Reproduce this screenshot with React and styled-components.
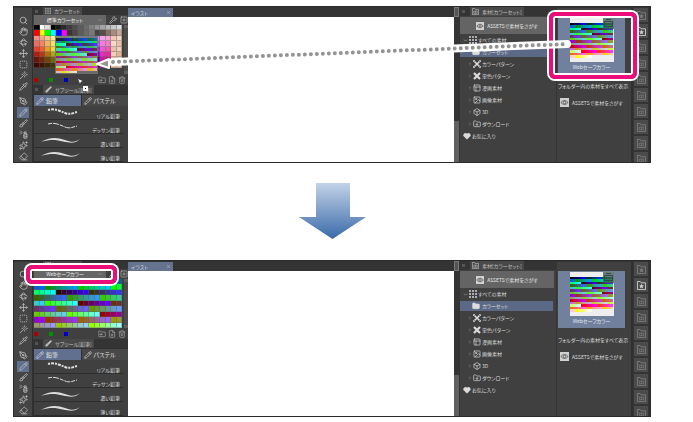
import styled, { createGlobalStyle } from "styled-components";
import {
    Search, Hand, Rotate3d, Move, SquareDashed, Wand, Pipette, PenTool, Pencil, Brush,
    SprayCan, Sparkles, Eraser, ChevronDown, ChevronRight, Wrench, SquarePlus, FolderInput,
    FilePlus, Trash2, Folder, X, PanelsTopLeft, Image, Box, FolderDown,
    Heart, MousePointer2
} from "lucide-react";

const GlobalStyle = createGlobalStyle`

    * {
        box-sizing: border-box;
    }

    body {
        margin: 0;
        background-color: #fff;
        font-family: 'Noto Sans CJK JP', sans-serif;
        font-size: 5px;
        line-height: 8px;
        color: #dcdcdc;
    }

    button, select {
        margin: 0;
        padding: 0;
        border: 0;
        font: inherit;
        color: inherit;
        background: none;
    }

    svg {
        display: block;
        flex-shrink: 0;
    }

    ul {
        margin: 0;
        padding: 0;
        list-style: none;
    }
`;

const Page = styled.main`
    display: flex;
    flex-direction: column;
    padding: 6px 42px 4px 13px;
    font-feature-settings: "palt";
    white-space: nowrap;
`;

const WindowDiv = styled.section`
    position: relative;
    display: grid;
    grid-template-columns: 19px 95px 1fr 6px 96px 77px 17px;
    border: 1px solid #2a2a2a;
    background-color: #303030;
`;

// columns that are cut off by the window and never make it taller
const Clipped = styled.div`
    height: 0;
    min-height: 100%;
    overflow: hidden;
`;

const ToolBar = styled(Clipped)`
    display: flex;
    flex-direction: column;
    margin-right: 1px;
    padding-top: 7px;
    background-color: #454545;
    border-top: 1px solid #363636;

    button:nth-child(8) {
        margin-top: 4px;
    }
`;

const ToolButton = styled.button`
    display: flex;
    flex-shrink: 0;
    align-items: center;
    justify-content: center;
    height: 11px;
    margin: 0 3px;
    color: #c4c4c4;
    background-color: ${(props) => (props.$active ? "#61708f" : "transparent")};
`;

const Panel = styled.div`
    display: flex;
    flex-direction: column;
    min-width: 0;
    background-color: #404040;
`;

const TabStrip = styled.div`
    display: flex;
    align-items: center;
    gap: 3px;
    height: ${(props) => props.$height || 8}px;
    padding-left: 2px;
    background-color: #343434;
`;

const Grip = styled.span`
    width: 3px;
    height: 3px;
    margin-right: 2px;
    background-color: #555;
`;

const PanelTab = styled.div`
    display: flex;
    align-items: center;
    gap: 3px;
    height: 100%;
    padding: 0 2px;
    color: #c0c0c0;
    background-color: #484848;
`;

const SetRow = styled.div`
    display: flex;
    align-items: center;
    gap: 3px;
    height: 10px;
    padding-left: 1px;
    color: #bdbdbd;
`;

const SelectBox = styled.label`
    display: grid;
    grid-template-columns: 1fr 9px;
    align-items: center;
    flex: 1;
    height: 10px;
    background-color: #666;
    color: #eee;

    select {
        grid-area: 1 / 1 / 2 / 3;
        height: 10px;
        padding-right: 10px;
        appearance: none;
        text-align: center;
        text-align-last: center;
    }

    svg {
        grid-area: 1 / 2;
        color: #aaa;
        pointer-events: none;
    }
`;

const PaletteRow = styled.div`
    display: flex;
    justify-content: space-between;
    height: 49px;
    padding-left: 1px;
`;

const SwatchGrid = styled.div`
    display: grid;
    grid-template-columns: repeat(16, 1fr);
    grid-auto-rows: 1fr;
    width: ${(props) => props.$width}px;
    height: ${(props) => props.$height}px;
`;

const Swatch = styled.span`
    box-shadow: ${(props) => (props.$lined ? "inset -1px -1px rgba(95, 95, 95, 0.4)" : "none")};
`;

const ScrollTrack = styled.div`
    width: 4px;
    background-color: #4c4c4c;
    border-top: 3px solid #606060;
    border-bottom: 3px solid #606060;
`;

const PaletteFooter = styled.div`
    display: flex;
    align-items: center;
    gap: 2px;
    height: 11px;
    padding: 0 2px 0 1px;
    color: #a8a8a8;

    .marks {
        display: flex;
        flex: 1;
        gap: 11px;
    }
`;

const Mark = styled.span`
    width: 4px;
    height: 4px;
    background-color: ${(props) => props.$color};
`;

const IconButton = styled.button`
    display: flex;
    align-items: center;
    justify-content: center;
`;

const GroupTabs = styled.div`
    display: flex;
    gap: 1px;
    height: 12px;
    padding: 1px 0 0 1px;
    background-color: #303030;
`;

const GroupTab = styled.button`
    display: flex;
    align-items: center;
    gap: 2px;
    flex: 1;
    padding-left: 2px;
    font-size: 6px;
    color: #e0e0e0;
    background-color: ${(props) => (props.$active ? "#61708f" : "#484848")};
`;

const BrushList = styled.ul`
    padding-right: 5px;
    border-left: 1px solid #303030;
`;

const BrushItem = styled.li`
    display: flex;
    height: 14px;
    padding: 0 3px 0 7px;
    border-bottom: 1px solid #2d2d2d;

    span {
        align-self: flex-end;
        flex: 1;
        line-height: 6px;
        text-align: right;
    }
`;

const CanvasArea = styled.div`
    display: flex;
    flex-direction: column;
    background-color: #fff;
`;

const CanvasBar = styled.div`
    display: flex;
    align-items: flex-end;
    height: 10px;
    background-color: #343434;
`;

const CanvasTab = styled.button`
    display: flex;
    align-items: center;
    justify-content: space-between;
    width: 45px;
    height: 9px;
    padding: 0 2px 0 3px;
    background-color: #66738f;
    color: #c8cedb;
`;

const SideScroll = styled.div`
    display: flex;
    flex-direction: column;
    justify-content: space-between;
    padding-right: 1px;
    background-color: #343434;

    i {
        height: 10px;
        background-color: #555;
        border: 1px solid #777;
    }

    b {
        height: 41px;
        background-color: #606060;
    }
`;

const AssetsButton = styled.button`
    display: flex;
    align-items: center;
    justify-content: center;
    gap: 3px;
    height: 17px;
    margin: 1px 2px 0 0;
    background-color: #646464;
    color: #e4e4e4;
`;

const TreeItem = styled.li`
    display: flex;
    align-items: center;
    height: 12px;
    padding-left: ${(props) => (props.$root ? 3 : 8)}px;

    > div {
        display: flex;
        align-items: center;
        gap: 1px;
        flex: 1;
        height: 10px;
    }

    ${(props) => props.$active && `
        padding-left: 0;
        padding-right: 3px;

        > div {
            gap: 2px;
            padding-left: 12px;
            background-color: #5b6986;
        }
    `}
`;

const Results = styled(Panel)`
    gap: 8px;
    padding: 9px 6px 0 1px;
    border-top: 1px solid #343434;
    border-left: 1px solid #353535;
    border-right: 2px solid #303030;
`;

const MaterialCard = styled.button`
    display: flex;
    flex-direction: column;
    align-items: center;
    gap: 1px;
    height: 57px;
    padding-top: 1px;
    background-color: #71809d;
    color: #e4e8f0;
`;

const Thumbnail = styled.span`
    display: grid;
    justify-items: center;
    align-items: center;
    width: 44px;
    height: 44px;
    background-color: #eee;

    > * {
        grid-area: 1 / 1;
    }

    > svg {
        justify-self: end;
        align-self: start;
        background-color: rgba(60, 85, 80, 0.75);
        color: #2f4a44;
    }
`;

const AssetsLink = styled.a`
    display: flex;
    align-items: center;
    gap: 3px;
    padding-left: 2px;
    color: inherit;
    text-decoration: none;
`;

const SideBar = styled(Clipped)`
    display: flex;
    flex-direction: column;
    background-color: #343434;
`;

const SideButton = styled.button`
    display: flex;
    flex-shrink: 0;
    align-items: center;
    justify-content: center;
    width: 16px;
    height: 16px;
    border: 1px solid #353535;
    background-color: #4b4b4b;
    color: ${(props) => (props.$active ? "#d0d0d0" : "#7d7d7d")};
`;

const ArrowBox = styled.div`
    display: flex;
    justify-content: center;
    padding: 20px 0 21px 1px;
`;

// callouts over the windows
const Callout = styled.div`
    position: absolute;
    border: 4px solid #ec0c7a;
    border-radius: 6px;
    box-shadow: 0 0 0 2px #fff, inset 0 0 0 2px #fff;
    pointer-events: none;
`;

const CardCallout = styled(Callout)`
    top: 5px;
    right: 13px;
    width: 88px;
    height: 67px;
`;

const SelectCallout = styled(Callout)`
    top: 4px;
    left: 12px;
    width: 91px;
    height: 19px;
`;

const DragPath = styled.svg`
    position: absolute;
    top: 30px;
    left: 82px;
    width: calc(100% - 165px);
    height: 40px;
    overflow: visible;
    pointer-events: none;
`;

const DragGhost = styled.div`
    position: absolute;
    top: 29px;
    left: 41px;
    padding: 2px 1px 1px;
    background-color: #737373;
    opacity: 0.85;
`;

const Cursor = styled.div`
    position: absolute;
    top: 70px;
    left: 62px;
    display: flex;
    align-items: flex-end;

    span {
        width: 5px;
        height: 5px;
        margin-bottom: -5px;
        margin-left: -2px;
        border: 2px solid #fff;
        background-color: #000;
    }
`;

const steps = ["00", "33", "66", "99", "cc", "ff"];
const webColors = steps.flatMap((r) => steps.flatMap((g) => steps.map((b) => `#${r}${g}${b}`)));

const firstRows = [
    "#000", "#fff", "#ddd", "#000", "#181818", "#2a2a2a", "#3c3c3c", "#4c4c4c",
    "#5c5c5c", "#6c6c6c", "#808080", "#929292", "#a4a4a4", "#b6b6b6", "#c8c8c8", "#dadada",
    "#f00", "#ff0", "#0f0", "#0ff", "#00f", "#f0f", "#3c3434", "#504444",
    "#5c5c5c", "#6a6a6a", "#787878", "#444", "#5a4c48", "#85706a", "#a88c80", "#c8a898"
];
const hues = [4, 16, 35, 56, 80, 110, 150, 180, 200, 220, 250, 275, 312, 325];
const shades = [74, 66, 55, 38, 24, 13];
const pinks = [80, 72, 64, 54, 44, 36];
const skins = ["#f0c8b4", "#f6d6c6", "#ecc0a8", "#f4cfba", "#e4b498", "#eec4ac"];

const standardColors = [
    ...firstRows,
    ...shades.flatMap((light, row) => [
        ...hues.map((hue) => `hsl(${hue}, 80%, ${hue > 300 ? pinks[row] : light}%)`),
        skins[row], skins[(row + 1) % 6]
    ])
];

function DotGrid({ size }) {
    return (
        <svg width={size} height={size} viewBox="0 0 8 8" fill="currentColor">
            <path d="M0 0h2v2H0zM3 0h2v2H3zM6 0h2v2H6zM0 3h2v2H0zM3 3h2v2H3zM6 3h2v2H6zM0 6h2v2H0zM3 6h2v2H3zM6 6h2v2H6z" opacity="0.7" />
        </svg>
    );
}

function ColorPattern({ size }) {
    return (
        <svg width={size} height={size} viewBox="0 0 8 8" fill="none" stroke="currentColor">
            <path d="M1.500 1.500L6.500 6.500M6.500 1.500L1.500 6.500" strokeWidth="1.600" />
            <path d="M.5 2V.5H2M6 .5h1.500V2M7.500 6v1.500H6M2 7.500H.5V6" strokeWidth="0.800" />
        </svg>
    );
}

function MonoPattern({ size }) {
    return (
        <svg width={size} height={size} viewBox="0 0 8 8" fill="none" stroke="currentColor">
            <path d="M1 1L7 7M7 1L1 7" strokeWidth="2.200" />
        </svg>
    );
}

function AssetsIcon({ size }) {
    return (
        <svg width={size} height={size} viewBox="0 0 10 10" fill="none" stroke="#555">
            <path d="M0 0h10v10H0z" fill="#d0d0d0" stroke="none" />
            <path d="M1 5Q5 0.500 9 5Q5 9.500 1 5z" strokeWidth="0.900" />
            <circle cx="5" cy="5" r="1.400" strokeWidth="0.900" />
        </svg>
    );
}

function MaterialFolder({ size, star }) {
    return (
        <svg width={size} height={size} viewBox="0 0 10 10" fill="none" stroke="currentColor">
            <path d="M.5 9.500V.5h3l1 1.500h5v7.500z" />
            {star
                ? <path d="M5 3l.8 1.800 1.900.2-1.400 1.200.4 1.900L5 7.100l-1.700 1 .4-1.900L2.300 5l1.900-.2z" fill="currentColor" stroke="none" />
                : <path d="M2.500 4.500h5v3h-5zM5 4.500v3" strokeWidth="0.800" />}
        </svg>
    );
}

const tools = [
    ["虫めがね", Search], ["移動", Hand], ["操作", Rotate3d], ["レイヤー移動", Move],
    ["選択範囲", SquareDashed], ["自動選択", Wand], ["スポイト", Pipette], ["ペン", PenTool],
    ["鉛筆", Pencil], ["筆", Brush], ["エアブラシ", SprayCan], ["デコレーション", Sparkles], ["消しゴム", Eraser]
];

const tree = [
    ["すべての素材", DotGrid], ["カラーセット", Folder], ["カラーパターン", ColorPattern], ["単色パターン", MonoPattern],
    ["漫画素材", PanelsTopLeft], ["画像素材", Image], ["3D", Box], ["ダウンロード", FolderDown], ["お気に入り", Heart]
];

const brushes = [
    { name: "リアル鉛筆", dash: "2 1 3 1", rough: 2 },
    { name: "デッサン鉛筆", dash: "4 1 6 1", rough: 1 },
    { name: "濃い鉛筆" },
    { name: "薄い鉛筆" }
];

function Swatches({ colors, width, height, lined }) {
    return (
        <SwatchGrid $width={width} $height={height}>
            {colors.map((color, i) => <Swatch key={i} $lined={lined} style={{ backgroundColor: color }} />)}
        </SwatchGrid>
    );
}

function BrushStroke({ dash, rough }) {
    return (
        <svg width="40" height="13" viewBox="0 0 40 13" fill="none" stroke="#ddd">
            {rough
                ? <path d="M7 4C14 2 19 5 24 7S32 7 36 6" strokeWidth={rough} strokeDasharray={dash} />
                : <path d="M0 8C8 3 16 3 24 6S34 8 39 5C34 10 29 9 22 7.500S10 5 0 8z" fill="#ddd" stroke="none" />}
        </svg>
    );
}

function ColorPanel({ setName, colors, rows }) {
    return (
        <Panel>
            <TabStrip>
                <Grip />
                <PanelTab><DotGrid size={6} />カラーセット</PanelTab>
            </TabStrip>

            <SetRow>
                <SelectBox>
                    <select aria-label="カラーセット" defaultValue={setName}>
                        <option>{setName}</option>
                    </select>
                    <ChevronDown size={6} />
                </SelectBox>
                <IconButton aria-label="カラーセットを編集"><Wrench size={8} /></IconButton>
                <IconButton aria-label="追加"><SquarePlus size={8} /></IconButton>
            </SetRow>

            <PaletteRow>
                <Swatches colors={colors.slice(0, rows * 16)} width={88} height={rows === 9 ? 49 : 43} lined />
                <ScrollTrack />
            </PaletteRow>

            <PaletteFooter>
                <div className="marks">
                    <Mark $color="#a80000" />
                    <Mark $color="#009000" />
                    <Mark $color="#0000c0" />
                </div>
                <IconButton aria-label="色を置き換え"><FolderInput size={8} /></IconButton>
                <IconButton aria-label="色を追加"><FilePlus size={8} /></IconButton>
                <IconButton aria-label="色を削除"><Trash2 size={8} /></IconButton>
            </PaletteFooter>

            <TabStrip $height={9}>
                <Grip />
                <PanelTab><Brush size={7} fill="currentColor" />サブツール[鉛筆]</PanelTab>
            </TabStrip>

            <GroupTabs>
                <GroupTab $active><Pencil size={8} />鉛筆</GroupTab>
                <GroupTab><Pencil size={8} />パステル</GroupTab>
            </GroupTabs>

            <BrushList>
                {brushes.map((brush) => (
                    <BrushItem key={brush.name}>
                        <BrushStroke dash={brush.dash} rough={brush.rough} />
                        <span>{brush.name}</span>
                    </BrushItem>
                ))}
            </BrushList>
        </Panel>
    );
}

function Library() {
    return (
        <Panel>
            <TabStrip $height={9}>
                <Grip />
                <PanelTab><MaterialFolder size={7} />素材[カラーセット]</PanelTab>
            </TabStrip>

            <AssetsButton><AssetsIcon size={8} />ASSETSで素材をさがす</AssetsButton>

            <ul>
                {tree.map(([name, Icon], i) => (
                    <TreeItem key={name} $root={i === 0 || i === 8} $active={i === 1}>
                        <div>
                            {i === 0 && <ChevronDown size={5} />}
                            {i > 1 && i < 8 && <ChevronRight size={4} />}
                            <Icon size={8} fill={i === 1 || i === 8 ? "currentColor" : "none"} />
                            {name}
                        </div>
                    </TreeItem>
                ))}
            </ul>
        </Panel>
    );
}

function Material() {
    return (
        <Results>
            <MaterialCard>
                <Thumbnail>
                    <Swatches colors={webColors} width={43} height={35} />
                    <svg width="11" height="11" viewBox="0 0 11 11" fill="none" stroke="currentColor">
                        <path d="M1.500 3.500h8v5h-8zM3 1.500h5" />
                    </svg>
                </Thumbnail>
                Webセーフカラー
            </MaterialCard>
            <span>フォルダー内の素材をすべて表示</span>
            <AssetsLink href="#"><AssetsIcon size={9} />ASSETSで素材をさがす</AssetsLink>
        </Results>
    );
}

function PaintWindow({ setName, colors, rows, children }) {
    return (
        <WindowDiv>

            <ToolBar>
                {tools.map(([name, Icon], i) => (
                    <ToolButton key={name} aria-label={name} $active={i === 8}><Icon size={9} /></ToolButton>
                ))}
            </ToolBar>

            <ColorPanel setName={setName} colors={colors} rows={rows} />

            <CanvasArea>
                <CanvasBar>
                    <CanvasTab>イラスト<X size={5} /></CanvasTab>
                </CanvasBar>
            </CanvasArea>

            <SideScroll><i /><b /></SideScroll>

            <Library />

            <Material />

            <SideBar>
                {[...Array(10).keys()].map((i) => (
                    <SideButton key={i} aria-label={`素材フォルダー${i + 1}`} $active={i === 1}>
                        <MaterialFolder size={9} star={i < 2} />
                    </SideButton>
                ))}
            </SideBar>

            {children}

        </WindowDiv>
    );
}

export default function App() {
    return (
        <>
            <GlobalStyle />
            <Page>

                <PaintWindow setName="標準カラーセット" colors={standardColors} rows={8}>
                    <DragGhost><Swatches colors={webColors} width={41} height={35} /></DragGhost>
                    <Cursor>
                        <MousePointer2 size={9} fill="#fff" color="#222" />
                        <span />
                    </Cursor>
                    <CardCallout />
                    <DragPath>
                        <line x1="17" y1="25" x2="100%" y2="7" stroke="#fff" strokeWidth="8" strokeLinecap="round" />
                        <line x1="17" y1="25" x2="100%" y2="7" stroke="#939393" strokeWidth="4" strokeLinecap="round" strokeDasharray="0 6" />
                        <path d="M1 27 L13 22 V31 Z" fill="#939393" stroke="#fff" strokeWidth="2" strokeLinejoin="round" />
                    </DragPath>
                </PaintWindow>

                <ArrowBox>
                    <svg width="67" height="56" viewBox="0 0 67 56">
                        <defs>
                            <linearGradient id="fall" x1="0" y1="0" x2="0" y2="1">
                                <stop offset="0" stopColor="#c3d3e8" />
                                <stop offset="1" stopColor="#3a6aa9" />
                            </linearGradient>
                        </defs>
                        <path d="M17 0H51V34H67L33.500 56L0 34H17Z" fill="url(#fall)" />
                    </svg>
                </ArrowBox>

                <PaintWindow setName="Webセーフカラー" colors={webColors} rows={9}>
                    <SelectCallout />
                </PaintWindow>

            </Page>
        </>
    );
}
